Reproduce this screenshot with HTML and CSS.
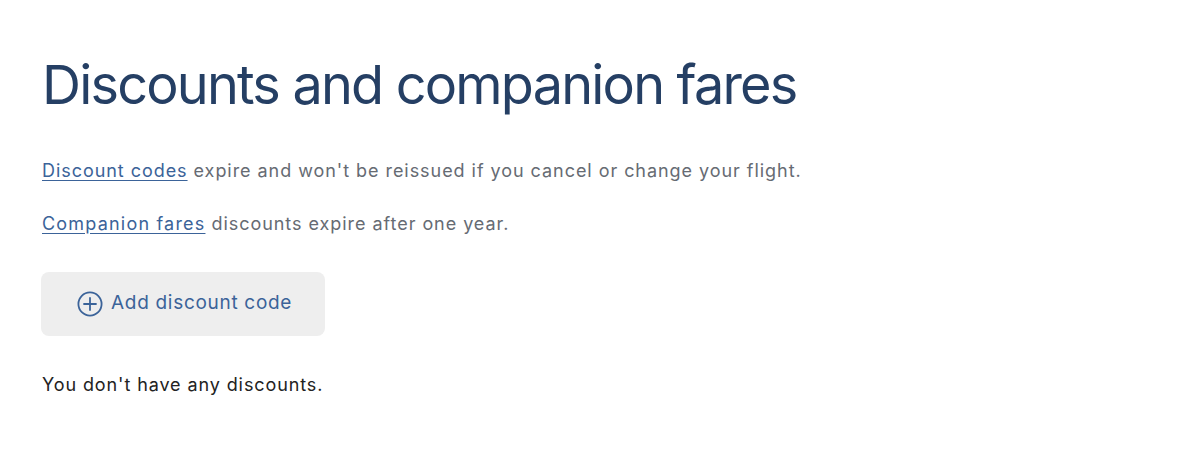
FILE: index.html
```html
<!DOCTYPE html>
<html lang="en">
<head>
  <meta charset="UTF-8">
  <title>Discounts and companion fares</title>
  <link rel="stylesheet" href="styles.css">
</head>
<body>
  <main class="discounts">
    <h1>Discounts and companion fares</h1>

    <p class="note"><a href="#">Discount codes</a> expire and won't be reissued if you cancel or change your flight.</p>
    <p class="note"><a href="#">Companion fares</a> discounts expire after one year.</p>

    <button class="add-btn">
      <svg width="26" height="26" viewBox="0 0 26 26" fill="none" stroke="currentColor" stroke-width="1.8">
        <circle cx="13" cy="13" r="11.6" />
        <path d="M13 7v12M7 13h12" stroke-linecap="round" />
      </svg>
      Add discount code
    </button>

    <p class="empty">You don't have any discounts.</p>
  </main>
</body>
</html>
```

FILE: styles.css
```css
body {
  margin: 0;
  background: #fff;
  font-family: Inter, "Noto Sans", sans-serif;
}
.discounts {
  padding: 50px 42px;
}
h1 {
  margin: 0 0 36px;
  font-size: 54px;
  font-weight: 400;
  line-height: 70px;
  letter-spacing: -1.8px;
  color: #253f64;
}
.note {
  margin: 0 0 23px;
  font-size: 18px;
  line-height: 30px;
  letter-spacing: 0.95px;
  color: #666b73;
}
.note a {
  color: #3b6399;
  text-decoration: underline;
  text-underline-offset: 3px;
}
.note + .note a {
  letter-spacing: 1.2px;
}
.add-btn {
  display: flex;
  align-items: center;
  gap: 8px;
  margin: 33px 0 34px -1px;
  width: 284px;
  height: 64px;
  padding: 0 0 3px 36px;
  background: #eeeeee;
  border: none;
  border-radius: 8px;
  color: #3b6399;
  font-family: inherit;
  font-size: 19px;
  letter-spacing: 0.7px;
}
.add-btn svg {
  margin-top: 3px;
}
.empty {
  margin: 0;
  font-size: 18px;
  line-height: 30px;
  letter-spacing: 0.9px;
  color: #222;
}
```
